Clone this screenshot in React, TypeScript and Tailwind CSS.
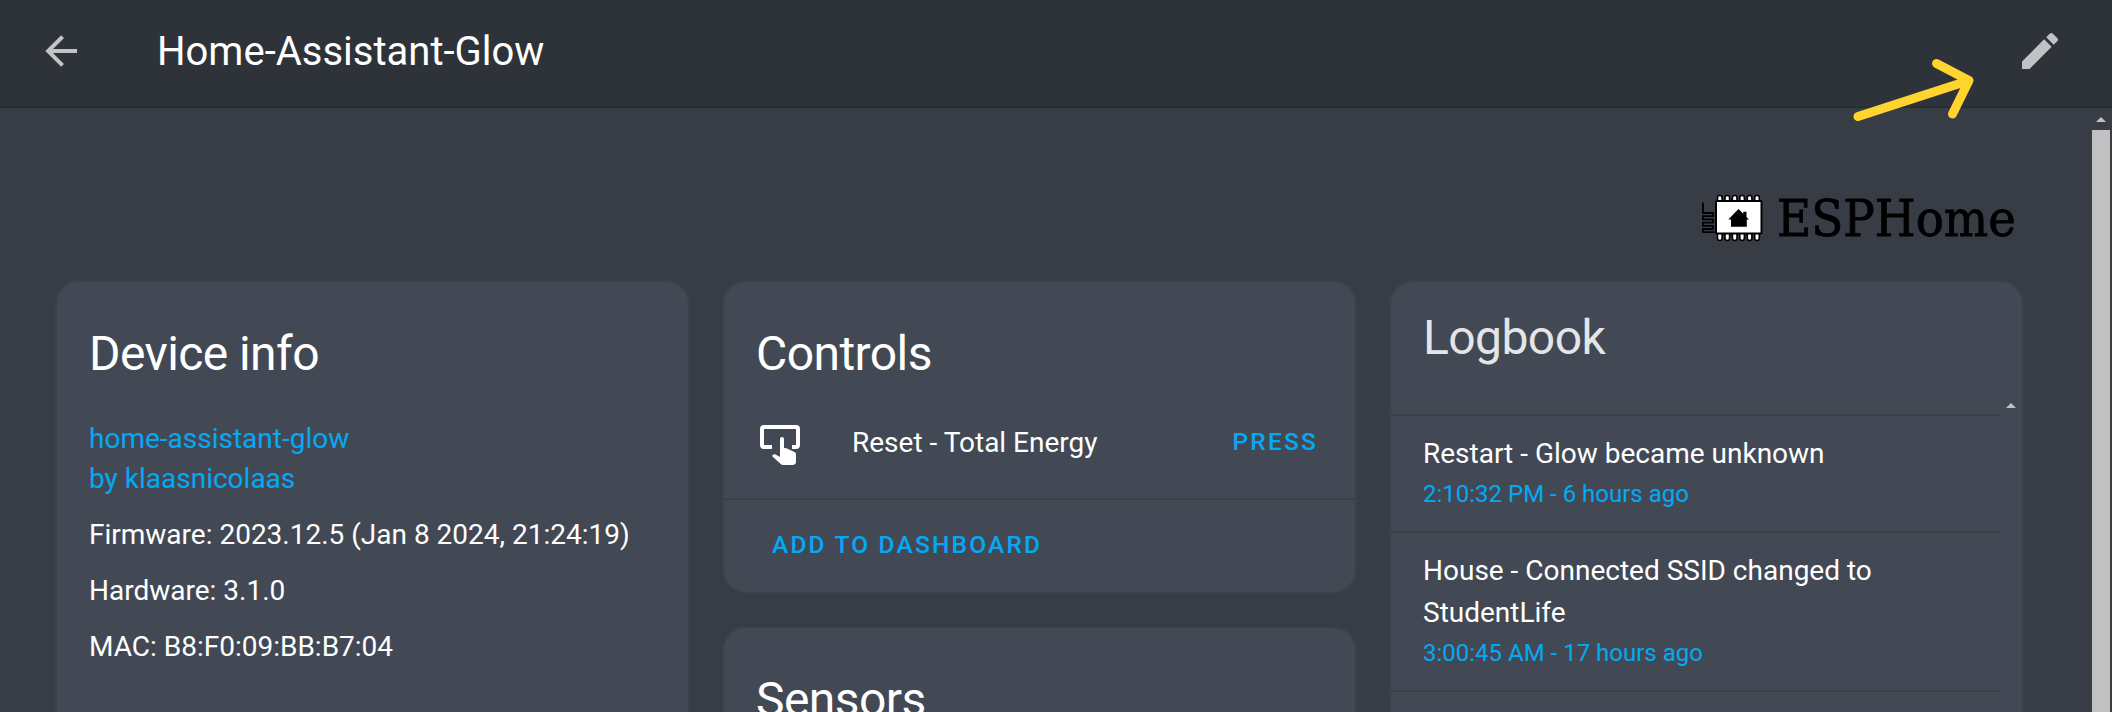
import type { ReactNode } from "react";

const PENCIL = "M20.71 7.04c.39-.39.39-1.04 0-1.41l-2.34-2.34c-.37-.39-1-.39-1.41 0l-1.84 1.83 3.75 3.75M3 17.25V21h3.75L17.81 9.93l-3.75-3.75L3 17.25z";

function Card({ children, className = "" }: { children: ReactNode; className?: string }) {
  return (
    <section className={`overflow-hidden rounded-[24px] border-2 border-[#3b4049] bg-[#434954] ${className}`}>
      {children}
    </section>
  );
}

function CardTitle({ children }: { children: ReactNode }) {
  return (
    <h2 className="px-8 pt-6 pb-4 text-[48px] leading-[96px] font-normal tracking-[-0.012em]">{children}</h2>
  );
}

function LogEntry({ text, time }: { text: string; time: string }) {
  return (
    <div className="mr-[22px] border-t-2 border-[#3b404a] px-8 pt-[17px] pb-[17px]">
      <p className="text-[28px] leading-[42px]">{text}</p>
      <p className="text-[24px] leading-[39px] text-[#03a9f4]">{time}</p>
    </div>
  );
}

function EspHomeLogo() {
  const pins = [1719.8, 1727.3, 1734.7, 1742.1, 1749.6, 1757];
  return (
    <svg className="h-[60px] w-[326px]" viewBox="1694 186 326 60" role="img" aria-label="ESPHome">
      {pins.map((x) => (
        <g key={x} fill="#fff" stroke="#000" strokeWidth="1.6">
          <rect x={x - 2.3} y="195.500" width="4.600" height="10" rx="2.200" />
          <rect x={x - 2.3} y="230.500" width="4.600" height="10" rx="2.200" />
        </g>
      ))}
      <rect x="1716" y="201" width="45.500" height="32.500" rx="1" fill="#fff" stroke="#000" strokeWidth="2" />
      <path
        d="M1703 202.500V213h10v3.200h-10v3.200h10v3.200h-10v3.200h10v3.200h-10v3.200h12.500"
        fill="none"
        stroke="#000"
        strokeWidth="1.800"
      />
      <path d="M1738.500 209l4.800 4.800v-2h3.200v5.200l2.500 2.500h-2.200v7.200h-15.800v-7.200h-2.700z" fill="#000" />
      <text
        x="1777"
        y="235.800"
        fontSize="50.500"
        textLength="239"
        lengthAdjust="spacingAndGlyphs"
        stroke="#000"
        strokeWidth="0.900"
        style={{ fontFamily: '"DejaVu Serif", serif' }}
      >
        ESPHome
      </text>
    </svg>
  );
}

export default function App() {
  return (
    <div className="relative flex h-[712px] w-[2112px] flex-col overflow-hidden bg-[#383c45] font-['Roboto',sans-serif] text-white">
      <header className="flex h-[108px] shrink-0 items-center border-b-2 border-[#282d33] bg-[#2e333a] pr-[48px] pb-1 pl-[37px]">
        <svg className="size-12 fill-[#c3c4c6]" viewBox="0 0 24 24">
          <path d="M20 11v2H8l5.500 5.500-1.420 1.420L4.160 12l7.920-7.920L13.500 5.500 8 11h12z" />
        </svg>
        <h1 className="ml-[72px] pt-[2px] text-[40px] leading-none font-normal">Home-Assistant-Glow</h1>
        <svg className="ml-auto size-12 fill-[#c1c2c4]" viewBox="0 0 24 24">
          <path d={PENCIL} />
        </svg>
      </header>

      <div className="flex min-h-0 flex-1">
        <main className="min-w-0 flex-1 pl-[55px]">
          <div className="flex h-[172px] items-start justify-end pt-[78px] pr-[72px]">
            <EspHomeLogo />
          </div>
          <div className="grid w-[1969px] grid-cols-3 items-start gap-8">
            <Card className="h-[500px]">
              <CardTitle>Device info</CardTitle>
              <div className="flex flex-col gap-4 px-8 pt-px text-[28px] leading-[40px]">
                <a className="text-[#03a9f4]">
                  home-assistant-glow
                  <br />
                  by klaasnicolaas
                </a>
                <p>Firmware: 2023.12.5 (Jan 8 2024, 21:24:19)</p>
                <p>Hardware: 3.1.0</p>
                <p>MAC: B8:F0:09:BB:B7:04</p>
              </div>
            </Card>

            <div className="flex flex-col gap-8">
              <Card className="h-[314px]">
                <CardTitle>Controls</CardTitle>
                <div className="flex h-[80px] items-start pl-8">
                  <svg className="mt-[3px] size-12 fill-white" viewBox="0 0 24 24">
                    <path d="M20 2H4a2 2 0 0 0-2 2v8a2 2 0 0 0 2 2h4v-2H4V4h16v8h-2v2h2a2 2 0 0 0 2-2V4a2 2 0 0 0-2-2z" />
                    <path d="M12 9a1 1 0 0 1 2 0v4.500l1.200.1 4 1.900c.5.2.8.7.8 1.300v3.800a1.500 1.500 0 0 1-1.400 1.400h-5.100c-.4 0-.7-.1-1-.4L8 17.500l.5-.6c.2-.2.5-.3.8-.3h.2L12 18V9z" />
                  </svg>
                  <span className="ml-[48px] pt-[5px] text-[28px] leading-[40px]">Reset - Total Energy</span>
                  <span className="ml-auto pt-[4px] pr-[37px] text-[24.500px] leading-[40px] font-medium tracking-[0.089em] text-[#03a9f4]">PRESS</span>
                </div>
                <div className="border-t-2 border-[#3b404a] px-12 pt-[25px] text-[24.500px] leading-[40px] font-medium tracking-[0.089em] text-[#03a9f4]">
                  ADD TO DASHBOARD
                </div>
              </Card>
              <Card className="h-[300px]">
                <CardTitle>Sensors</CardTitle>
              </Card>
            </div>

            <Card className="h-[500px]">
              <div className="flex h-[132px] items-start justify-between">
                <h2 className="pt-2 pl-8 text-[48px] leading-[96px] font-normal tracking-[-0.012em] text-[#e4e5e7]">Logbook</h2>
                <svg className="mt-[121px] mr-[6px] h-[5px] w-[10px] fill-[#c1c1c1]" viewBox="0 0 10 5">
                  <path d="M0 5 5 0l5 5z" />
                </svg>
              </div>
              <LogEntry text="Restart - Glow became unknown" time="2:10:32 PM - 6 hours ago" />
              <LogEntry text="House - Connected SSID changed to StudentLife" time="3:00:45 AM - 17 hours ago" />
              <div className="mr-[22px] border-t-2 border-[#3b404a]" />
            </Card>
          </div>
        </main>
        <div className="flex w-[20px] shrink-0 flex-col pr-[2px]">
          <svg className="mt-[9px] ml-1 h-[5px] w-[10px] fill-[#c1c1c1]" viewBox="0 0 10 5">
            <path d="M0 5 5 0l5 5z" />
          </svg>
          <div className="mt-2 flex-1 bg-[#c1c1c1]" />
        </div>
      </div>

      <svg
        className="absolute top-[50px] left-[1846px] h-[80px] w-[140px]"
        viewBox="1846 50 140 80"
        fill="none"
        stroke="#ffd42e"
        strokeWidth="9"
        strokeLinecap="round"
        strokeLinejoin="round"
      >
        <path d="M1858 116.500 1969 80.500M1936.500 63.500 1969 80.500 1952.500 114" />
      </svg>
    </div>
  );
}
